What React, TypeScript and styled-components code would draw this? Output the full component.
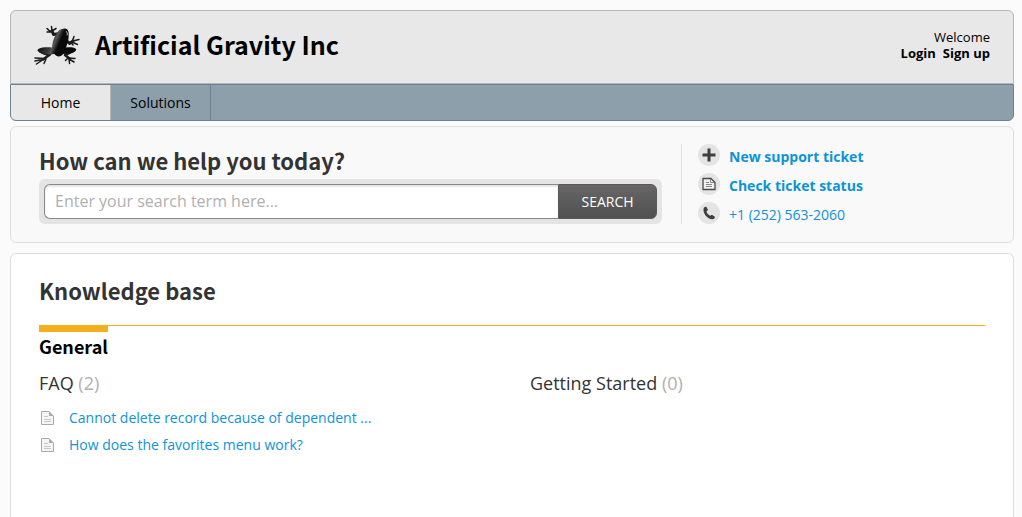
import React from "react";
import styled, { createGlobalStyle } from "styled-components";

const heading = `"Source Sans Pro", "Noto Sans CJK SC", sans-serif`;

const GlobalStyle = createGlobalStyle`
  *, *::before, *::after { box-sizing: border-box; }
  body {
    margin: 0;
    min-height: 100vh;
    background: #fbfbfb;
    color: #000;
    font: 14px/20px "Open Sans", sans-serif;
  }
  h1, h2, h3, h4, p, ul { margin: 0; padding: 0; }
  ul { list-style: none; }
  a { color: inherit; text-decoration: none; }
  svg { display: block; flex: none; }
`;

const Page = styled.div`
  display: flex;
  flex-direction: column;
  min-height: 100vh;
  padding: 10px 8px 0 10px;
`;

const Header = styled.header`
  display: flex;
  align-items: center;
  justify-content: space-between;
  height: 74px;
  padding: 0 23px 4px 22px;
  background: #e8e8e8;
  border: 1px solid #b4b7b9;
  border-radius: 6px 6px 0 0;
`;

const Brand = styled.a`
  display: flex;
  align-items: center;
  gap: 14px;
`;

const Title = styled.h1`
  padding-bottom: 2px;
  font: 700 25px/36px ${heading};
`;

const Account = styled.div`
  font-size: 13px;
  line-height: 16px;
  text-align: right;
`;

const AccountLinks = styled.div`
  display: flex;
  gap: 7px;
  font-weight: 700;
`;

const Nav = styled.nav`
  display: flex;
  height: 37px;
  margin-bottom: 5px;
  background: #8c9fab;
  border: 1px solid #6c8190;
  border-radius: 0 0 6px 6px;
  overflow: hidden;
`;

const Tab = styled.a<{ $active?: boolean }>`
  display: flex;
  align-items: center;
  justify-content: center;
  width: 100px;
  background: ${(p) => (p.$active ? "#e8e8e8" : "transparent")};
  border-right: 1px solid ${(p) => (p.$active ? "#b4b7b9" : "#6c8190")};
`;

const HelpPanel = styled.section`
  display: flex;
  margin-bottom: 10px;
  padding: 17px 28px 18px;
  background: #f9f9f9;
  border: 1px solid #dedede;
  border-radius: 6px;
`;

const SearchArea = styled.div`
  flex: 1;
  padding-right: 19px;
`;

const SectionTitle = styled.h2`
  padding-bottom: 3px;
  color: #333;
  font: 700 22px/32px ${heading};
`;

const SearchForm = styled.form`
  display: flex;
  height: 45px;
  padding: 5px;
  background: #e4e4e4;
  border-radius: 6px;
`;

const SearchInput = styled.input`
  flex: 1;
  min-width: 0;
  padding: 0 10px 2px;
  background: #fff;
  border: 1px solid #888;
  border-right: 0;
  border-radius: 6px 0 0 6px;
  box-shadow: inset 0 2px 2px #e4e4e4;
  font: 16px/20px "Open Sans", sans-serif;
  &::placeholder { color: #b0b0b0; opacity: 1; }
`;

const SearchButton = styled.button`
  width: 99px;
  padding: 0;
  background: linear-gradient(#686666, #505050);
  border: 1px solid #5a5858;
  border-radius: 0 6px 6px 0;
  color: #fff;
  font: 14px/20px "Open Sans", sans-serif;
`;

const Contact = styled.ul`
  display: flex;
  flex-direction: column;
  gap: 7px;
  width: 304px;
  padding-left: 16px;
  border-left: 1px solid #dedede;
`;

const ContactLink = styled.a<{ $strong?: boolean }>`
  display: flex;
  align-items: flex-start;
  gap: 9px;
  height: 22px;
  color: #0d93d9;
  font-weight: ${(p) => (p.$strong ? 700 : 400)};
  line-height: 26px;
`;

const IconDisc = styled.span`
  display: grid;
  place-items: center;
  width: 22px;
  height: 22px;
  background: #e4e4e4;
  border-radius: 50%;
`;

const Knowledge = styled.main`
  flex: 1;
  padding: 20px 28px;
  background: #fff;
  border: 1px solid #dedede;
  border-bottom: 0;
  border-radius: 6px 6px 0 0;
`;

const Category = styled.div`
  margin-top: 16px;
  border-top: 1px solid #f5af1b;
`;

const CategoryTitle = styled.h3`
  width: fit-content;
  border-top: 6px solid #f5af1b;
  font: 700 18px/28px ${heading};
`;

const Folders = styled.div`
  display: grid;
  grid-template-columns: 1fr 1fr;
  gap: 36px;
  margin-top: 11px;
`;

const FolderTitle = styled.h4`
  color: #333;
  font-size: 18px;
  font-weight: 400;
  line-height: 24px;
  span { color: #b0b0b0; }
`;

const Article = styled.a`
  display: flex;
  align-items: center;
  gap: 14px;
  height: 27px;
  color: #0d93d9;
`;

const Articles = styled.ul`
  margin-top: 9px;
`;

const Frog = () => (
  <svg width="48" height="42" viewBox="0 0 48 42" aria-hidden="true">
    <defs>
      <linearGradient id="skin" x1="0" y1="0" x2="1" y2="0.3">
        <stop offset="0.2" stopColor="#0c0c0c" />
        <stop offset="0.48" stopColor="#3a3a3a" />
        <stop offset="0.54" stopColor="#585858" />
        <stop offset="0.66" stopColor="#0a0a0a" />
      </linearGradient>
    </defs>
    <g fill="none" stroke="#1c1c1c" strokeLinecap="round" strokeLinejoin="round">
      <path strokeWidth="3" d="M27 9.5 L20.5 10.5 L19 7" />
      <path strokeWidth="1.5" d="M19 8 Q16 7 14 4.5 M19 7 L18.5 2.5 M19 7 L23 4.5 M18 8 L14 8" />
      <path strokeWidth="2.8" d="M33 16 L36.5 19.5 L40 17" />
      <path strokeWidth="1.5" d="M39 18 L41 12.5 M40 17 L46 15.5 M39 18 L44.5 20.5 M38 18.5 L40 21" />
      <path strokeWidth="2.6" d="M7 27.5 Q13 31 17 30.5 L10 35.5" />
      <path strokeWidth="1.5" d="M12 34.5 L2 34 M11 35 L3.5 40 M9 35.5 L2 37 M13 35 L11 39.5" />
      <path strokeWidth="2.6" d="M40 27 L32 31 L37 35" />
      <path strokeWidth="1.5" d="M35 34 L42 34.5 M36 35 L41 38 M36 34.5 L36.5 39.5 M35 34 L32.5 36.5" />
    </g>
    <path
      fill="url(#skin)"
      d="M23 10.5 C25 6.5 28 4.3 32 4.5 C34.5 4.7 36 7 35.7 10 C36 15 34.5 20 33 23.5 C37 23 42.5 23.2 43.3 25.5 C42.7 29.5 35 29.5 30 30 C28.5 33 23.5 33.5 21.5 30 C15 30.5 9 30.2 4.6 27 C3.8 23.2 12.5 22.6 19 23.5 C19.6 18.5 20.4 14.5 23 10.5 Z"
    />
    <path fill="none" stroke="#bbb" strokeLinecap="round" d="M33.5 7.5 Q35 9 34.3 11" />
    <circle cx="27" cy="7.5" r="0.7" fill="#555" />
  </svg>
);

const PlusIcon = () => (
  <svg width="14" height="14" viewBox="0 0 14 14" aria-hidden="true">
    <path stroke="#3e3e3e" strokeWidth="3" d="M7 0.5 V13.5 M0.5 7 H13.5" />
  </svg>
);

const NoteIcon = () => (
  <svg width="14" height="14" viewBox="0 0 14 14" fill="none" aria-hidden="true">
    <path fill="#f1f1f1" stroke="#484848" strokeWidth="1.3" strokeLinejoin="round" d="M1 1.5 H9 L13 5.5 V12.5 H1 Z" />
    <path stroke="#888" d="M8.5 2 V5.5 H12 M4 5.5 H7 M4 7.5 H10 M4 9.5 H10" />
  </svg>
);

const PhoneIcon = () => (
  <svg width="14" height="14" viewBox="0 0 14 14" aria-hidden="true">
    <path fill="#3e3e3e" d="M2 1.5 L4.2 .5 L6 4 L4.4 5.4 C5.1 7.4 6.4 8.8 8.2 9.8 L10 8.7 L13 11 L12.3 12.7 C7.2 15 -.5 7.5 2 1.5 Z" />
  </svg>
);

const ArticleIcon = () => (
  <svg width="16" height="16" viewBox="0 0 16 16" fill="none" aria-hidden="true">
    <path fill="#f5f5f5" stroke="#aaa" strokeLinejoin="round" d="M2.5 1.5 H10 L14.5 6 V14.5 H2.5 Z" />
    <path fill="#aaa" d="M10 1.5 L14.5 6 H10 Z" />
    <path stroke="#c8c8c8" d="M5 6.5 H9 M5 9.5 H12 M5 11.5 H12" />
  </svg>
);

const articles = ["Cannot delete record because of dependent ...", "How does the favorites menu work?"];

export default function App() {
  return (
    <>
      <GlobalStyle />
      <Page>
        <Header>
          <Brand href="#">
            <Frog />
            <Title>Artificial Gravity Inc</Title>
          </Brand>
          <Account>
            <p>Welcome</p>
            <AccountLinks>
              <a href="#login">Login</a>
              <a href="#signup">Sign up</a>
            </AccountLinks>
          </Account>
        </Header>
        <Nav>
          <Tab href="#home" $active>Home</Tab>
          <Tab href="#solutions">Solutions</Tab>
        </Nav>
        <HelpPanel>
          <SearchArea>
            <SectionTitle>How can we help you today?</SectionTitle>
            <SearchForm>
              <SearchInput type="text" aria-label="Search" placeholder="Enter your search term here..." />
              <SearchButton type="button">SEARCH</SearchButton>
            </SearchForm>
          </SearchArea>
          <Contact>
            <li><ContactLink href="#new" $strong><IconDisc><PlusIcon /></IconDisc>New support ticket</ContactLink></li>
            <li><ContactLink href="#status" $strong><IconDisc><NoteIcon /></IconDisc>Check ticket status</ContactLink></li>
            <li><ContactLink href="tel:+12525632060"><IconDisc><PhoneIcon /></IconDisc>+1 (252) 563-2060</ContactLink></li>
          </Contact>
        </HelpPanel>
        <Knowledge>
          <SectionTitle>Knowledge base</SectionTitle>
          <Category>
            <CategoryTitle>General</CategoryTitle>
            <Folders>
              <section>
                <FolderTitle>FAQ <span>(2)</span></FolderTitle>
                <Articles>
                  {articles.map((a) => (
                    <li key={a}><Article href="#article"><ArticleIcon />{a}</Article></li>
                  ))}
                </Articles>
              </section>
              <section>
                <FolderTitle>Getting Started <span>(0)</span></FolderTitle>
              </section>
            </Folders>
          </Category>
        </Knowledge>
      </Page>
    </>
  );
}
